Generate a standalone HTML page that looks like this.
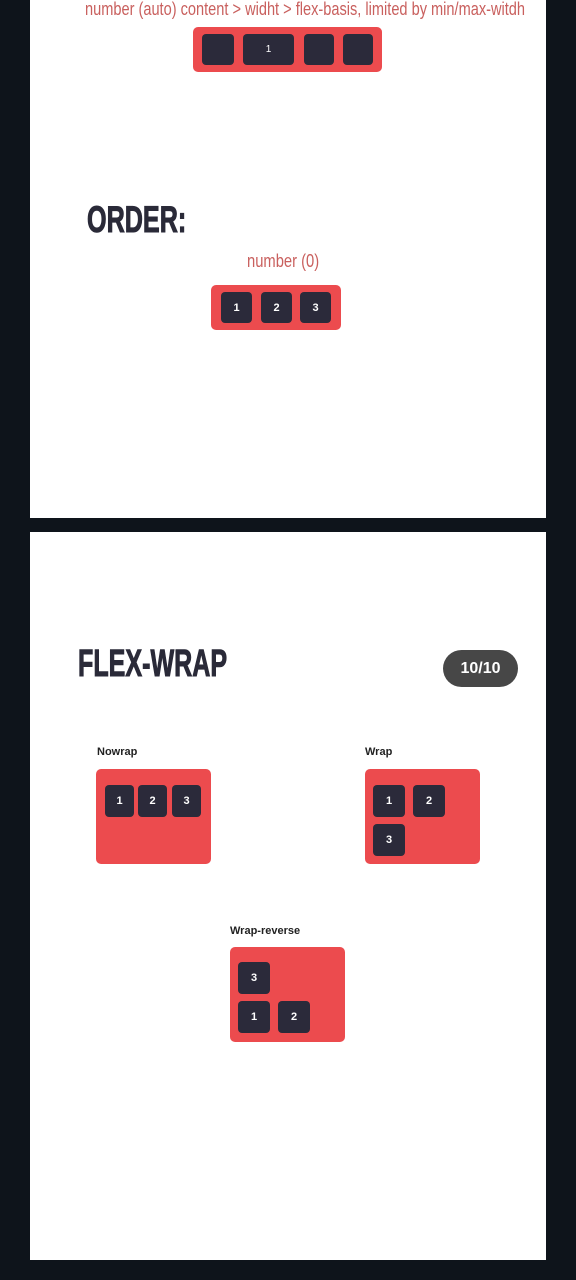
<!DOCTYPE html>
<html><head><meta charset="utf-8"><style>
*{margin:0;padding:0;box-sizing:border-box}
body{width:576px;height:1280px;background:#0e141b;position:relative;overflow:hidden;font-family:"Liberation Sans",sans-serif}
.p{position:absolute;left:30px;width:516px;background:#fff}
.a{position:absolute}
.box{position:absolute;background:#ec4b4e;border-radius:5px}
.sq{position:absolute;background:#2b2a3a;border-radius:4px;color:#fff;font-size:11px;display:flex;align-items:center;justify-content:center;font-weight:bold}
.cond{font-family:"Liberation Sans Narrow","Liberation Sans",sans-serif;transform-origin:left top;white-space:nowrap}
.lbl{position:absolute;font-size:11px;font-weight:bold;color:#222}
</style></head><body>
<div class="p" style="top:0;height:518px"></div>
<div class="p" style="top:532px;height:728px"></div>

<div class="a cond" style="left:85px;top:-1px;font-size:18px;color:#c9605e;transform:scaleX(0.81)">number (auto) content &gt; widht &gt; flex-basis, limited by min/max-witdh</div>
<div class="box" style="left:193px;top:27px;width:189px;height:45px"></div>
<div class="sq" style="left:202px;top:34px;width:32px;height:31px"></div>
<div class="sq" style="left:243px;top:34px;width:51px;height:31px;font-weight:normal;font-size:10px">1</div>
<div class="sq" style="left:304px;top:34px;width:30px;height:31px"></div>
<div class="sq" style="left:343px;top:34px;width:30px;height:31px"></div>

<div class="a cond" style="left:87px;top:199px;font-size:37px;font-weight:bold;color:#2a2a38;transform:scaleX(0.68);-webkit-text-stroke:1px #2a2a38">ORDER:</div>
<div class="a cond" style="left:247px;top:251px;font-size:18px;color:#c9605e;transform:scaleX(0.82)">number (0)</div>
<div class="box" style="left:211px;top:285px;width:130px;height:45px"></div>
<div class="sq" style="left:221px;top:292px;width:31px;height:31px">1</div>
<div class="sq" style="left:261px;top:292px;width:31px;height:31px">2</div>
<div class="sq" style="left:300px;top:292px;width:31px;height:31px">3</div>

<div class="a cond" style="left:78px;top:643px;font-size:38px;font-weight:bold;color:#2a2a38;transform:scaleX(0.66);-webkit-text-stroke:1px #2a2a38">FLEX-WRAP</div>
<div class="a" style="left:443px;top:650px;width:75px;height:37px;border-radius:19px;background:#474747;color:#fff;font-size:16px;font-weight:bold;display:flex;align-items:center;justify-content:center">10/10</div>

<div class="lbl" style="left:97px;top:746px">Nowrap</div>
<div class="box" style="left:96px;top:769px;width:115px;height:95px"></div>
<div class="sq" style="left:105px;top:785px;width:29px;height:32px">1</div>
<div class="sq" style="left:138px;top:785px;width:29px;height:32px">2</div>
<div class="sq" style="left:172px;top:785px;width:29px;height:32px">3</div>

<div class="lbl" style="left:365px;top:746px">Wrap</div>
<div class="box" style="left:365px;top:769px;width:115px;height:95px"></div>
<div class="sq" style="left:373px;top:785px;width:32px;height:32px">1</div>
<div class="sq" style="left:413px;top:785px;width:32px;height:32px">2</div>
<div class="sq" style="left:373px;top:824px;width:32px;height:32px">3</div>

<div class="lbl" style="left:230px;top:925px">Wrap-reverse</div>
<div class="box" style="left:230px;top:947px;width:115px;height:95px"></div>
<div class="sq" style="left:238px;top:962px;width:32px;height:32px">3</div>
<div class="sq" style="left:238px;top:1001px;width:32px;height:32px">1</div>
<div class="sq" style="left:278px;top:1001px;width:32px;height:32px">2</div>
</body></html>
